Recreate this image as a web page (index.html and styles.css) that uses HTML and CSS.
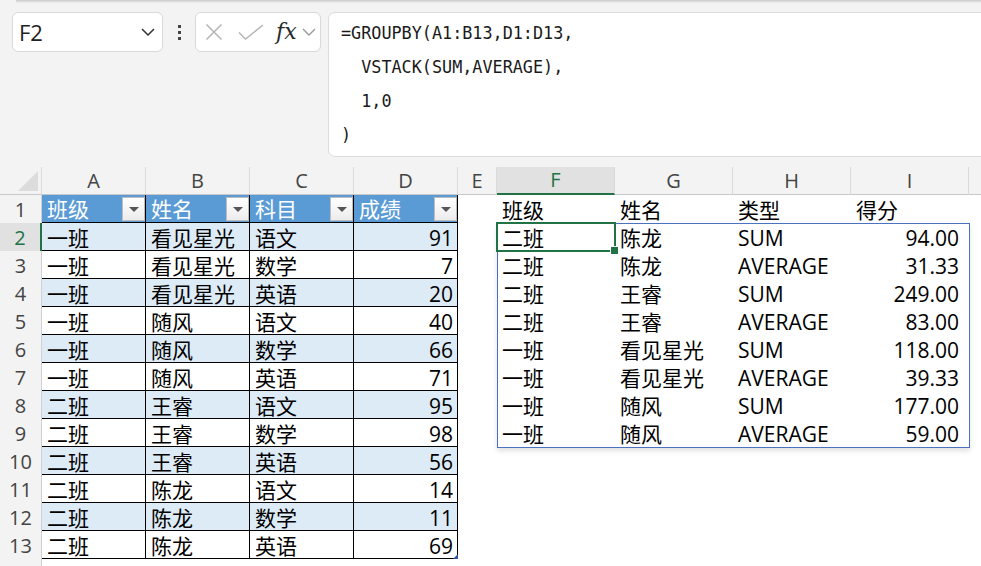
FILE: index.html
```html
<!DOCTYPE html>
<html lang="zh-CN">
<head>
<meta charset="utf-8">
<title>GROUPBY</title>
<link rel="stylesheet" href="styles.css">
</head>
<body>
<div class="topshade"></div>
<div class="fbar">
  <div class="namebox"><span>F2</span>
    <svg width="14" height="8" viewBox="0 0 14 8"><path d="M1 1l6 6 6-6" fill="none" stroke="#333" stroke-width="1.5"/></svg>
  </div>
  <div class="dots"><i></i><i></i><i></i></div>
  <div class="fxbox">
    <svg class="ic-x" width="18" height="18" viewBox="0 0 18 18"><path d="M1.5 1.5l15 15M16.5 1.5l-15 15" stroke="#b5b5b5" stroke-width="1.5" fill="none"/></svg>
    <svg class="ic-ok" width="26" height="16" viewBox="0 0 26 16"><path d="M1 8.5l6.5 6.5L25 1" stroke="#b5b5b5" stroke-width="1.5" fill="none"/></svg>
    <span class="fx">fx</span>
    <svg width="14" height="8" viewBox="0 0 14 8"><path d="M1 1l6 6 6-6" fill="none" stroke="#9a9a9a" stroke-width="1.4"/></svg>
  </div>
  <div class="formula"><pre>=GROUPBY(A1:B13,D1:D13,
  VSTACK(SUM,AVERAGE),
  1,0
)</pre></div>
</div>

<div class="sheet">
  <div class="c corner"><i class="tri"></i></div>
  <div class="c ch">A</div><div class="c ch">B</div><div class="c ch">C</div><div class="c ch">D</div><div class="c ch">E</div>
  <div class="c ch sel">F</div><div class="c ch">G</div><div class="c ch">H</div><div class="c ch">I</div><div class="c ch last"></div>

  <div class="c rh">1</div>
  <div class="c t th"><span>班级</span><i class="fb"></i></div>
  <div class="c t th"><span>姓名</span><i class="fb"></i></div>
  <div class="c t th"><span>科目</span><i class="fb"></i></div>
  <div class="c t th"><span>成绩</span><i class="fb"></i></div>
  <div class="c"></div><div class="c">班级</div><div class="c">姓名</div><div class="c">类型</div><div class="c">得分</div><div class="c"></div>

  <div class="c rh sel">2</div>
  <div class="c t band">一班</div><div class="c t band">看见星光</div><div class="c t band">语文</div><div class="c t band num">91</div>
  <div class="c"></div><div class="c">二班</div><div class="c">陈龙</div><div class="c">SUM</div><div class="c num2">94.00</div><div class="c"></div>

  <div class="c rh">3</div>
  <div class="c t">一班</div><div class="c t">看见星光</div><div class="c t">数学</div><div class="c t num">7</div>
  <div class="c"></div><div class="c">二班</div><div class="c">陈龙</div><div class="c">AVERAGE</div><div class="c num2">31.33</div><div class="c"></div>

  <div class="c rh">4</div>
  <div class="c t band">一班</div><div class="c t band">看见星光</div><div class="c t band">英语</div><div class="c t band num">20</div>
  <div class="c"></div><div class="c">二班</div><div class="c">王睿</div><div class="c">SUM</div><div class="c num2">249.00</div><div class="c"></div>

  <div class="c rh">5</div>
  <div class="c t">一班</div><div class="c t">随风</div><div class="c t">语文</div><div class="c t num">40</div>
  <div class="c"></div><div class="c">二班</div><div class="c">王睿</div><div class="c">AVERAGE</div><div class="c num2">83.00</div><div class="c"></div>

  <div class="c rh">6</div>
  <div class="c t band">一班</div><div class="c t band">随风</div><div class="c t band">数学</div><div class="c t band num">66</div>
  <div class="c"></div><div class="c">一班</div><div class="c">看见星光</div><div class="c">SUM</div><div class="c num2">118.00</div><div class="c"></div>

  <div class="c rh">7</div>
  <div class="c t">一班</div><div class="c t">随风</div><div class="c t">英语</div><div class="c t num">71</div>
  <div class="c"></div><div class="c">一班</div><div class="c">看见星光</div><div class="c">AVERAGE</div><div class="c num2">39.33</div><div class="c"></div>

  <div class="c rh">8</div>
  <div class="c t band">二班</div><div class="c t band">王睿</div><div class="c t band">语文</div><div class="c t band num">95</div>
  <div class="c"></div><div class="c">一班</div><div class="c">随风</div><div class="c">SUM</div><div class="c num2">177.00</div><div class="c"></div>

  <div class="c rh">9</div>
  <div class="c t">二班</div><div class="c t">王睿</div><div class="c t">数学</div><div class="c t num">98</div>
  <div class="c"></div><div class="c">一班</div><div class="c">随风</div><div class="c">AVERAGE</div><div class="c num2">59.00</div><div class="c"></div>

  <div class="c rh">10</div>
  <div class="c t band">二班</div><div class="c t band">王睿</div><div class="c t band">英语</div><div class="c t band num">56</div>
  <div class="c"></div><div class="c"></div><div class="c"></div><div class="c"></div><div class="c"></div><div class="c"></div>

  <div class="c rh">11</div>
  <div class="c t">二班</div><div class="c t">陈龙</div><div class="c t">语文</div><div class="c t num">14</div>
  <div class="c"></div><div class="c"></div><div class="c"></div><div class="c"></div><div class="c"></div><div class="c"></div>

  <div class="c rh">12</div>
  <div class="c t band">二班</div><div class="c t band">陈龙</div><div class="c t band">数学</div><div class="c t band num">11</div>
  <div class="c"></div><div class="c"></div><div class="c"></div><div class="c"></div><div class="c"></div><div class="c"></div>

  <div class="c rh">13</div>
  <div class="c t">二班</div><div class="c t">陈龙</div><div class="c t">英语</div><div class="c t num endcell">69</div>
  <div class="c"></div><div class="c"></div><div class="c"></div><div class="c"></div><div class="c"></div><div class="c"></div>

  <div class="c rh"></div><div class="fill"></div>

  <div class="spill"></div>
  <div class="selbox"><i class="handle"></i></div>
</div>
</body>
</html>
```

FILE: styles.css
```css
html, body {
  margin: 0;
  padding: 0;
}
body {
  width: 981px;
  height: 566px;
  overflow: hidden;
  background: #f3f3f3;
  font-family: "Open Sans", "Noto Sans CJK SC", sans-serif;
  color: #000;
}
.topshade {
  height: 3px;
  margin-left: 16px;
  background: linear-gradient(#c9c9c9, #f3f3f3);
}
.fbar {
  box-sizing: border-box;
  height: 164px;
  padding: 9px 0 0 12px;
  display: flex;
  align-items: flex-start;
}
.namebox {
  box-sizing: border-box;
  width: 151px;
  height: 40px;
  background: #fff;
  border: 1px solid #d9d9d9;
  border-radius: 6px;
  display: flex;
  align-items: center;
  justify-content: space-between;
  padding: 0 7px 0 6px;
  font-size: 22px;
  line-height: 28px;
  color: #222;
}
.dots {
  width: 32px;
  height: 40px;
  display: flex;
  flex-direction: column;
  align-items: center;
  justify-content: center;
  gap: 3px;
}
.dots i {
  width: 3px;
  height: 3px;
  background: #444;
}
.fxbox {
  box-sizing: border-box;
  width: 126px;
  height: 40px;
  background: #fff;
  border: 1px solid #d9d9d9;
  border-radius: 6px;
  display: flex;
  align-items: center;
  padding: 0 0 0 9px;
}
.ic-x { margin-right: 15px; }
.ic-ok { margin-right: 12px; }
.fx {
  font-family: "DejaVu Serif", "Liberation Serif", serif;
  font-style: italic;
  font-size: 22px;
  color: #2a2a2a;
  margin-right: 5px;
  line-height: 1;
}
.formula {
  box-sizing: border-box;
  flex: 1;
  margin-left: 7px;
  margin-right: -12px;
  height: 145px;
  background: #fff;
  border: 1px solid #dcdcdc;
  border-radius: 7px;
  padding: 3px 12px;
}
.formula pre {
  margin: 0;
  font-family: "DejaVu Sans Mono", monospace;
  font-size: 16.8px;
  line-height: 34px;
  color: #1a1a1a;
}

.sheet {
  position: relative;
  height: 399px;
  background: #fff;
  display: grid;
  grid-template-columns: 42px 104px 104px 104px 104px 39px 118px 118px 118px 118px 1fr;
  grid-template-rows: repeat(14, 28px) 1fr;
}
.c {
  box-sizing: border-box;
  display: flex;
  align-items: center;
  padding: 2px 5px 0;
  font-size: 21px;
  line-height: 24px;
  white-space: nowrap;
  min-width: 0;
}
.corner {
  background: #f3f3f3;
  border-right: 1px solid #dadada;
  border-bottom: 1px solid #c8c8c8;
  align-items: flex-end;
  justify-content: flex-end;
  padding: 0 3px 3px 0;
}
.tri {
  width: 0;
  height: 0;
  border-left: 20px solid transparent;
  border-bottom: 20px solid #dcdcdc;
}
.ch {
  background: #f3f3f3;
  border-right: 1px solid #dadada;
  border-bottom: 1px solid #c8c8c8;
  justify-content: center;
  color: #444;
  padding: 0;
  font-size: 20px;
}
.ch.sel {
  background: #e1e1e1;
  color: #217346;
  border-bottom: 2px solid #217346;
}
.ch.last { border-right: 0; }
.rh {
  background: #f3f3f3;
  border-right: 1px solid #d0d0d0;
  justify-content: center;
  color: #444;
  padding: 2px 0 0;
  font-size: 20px;
}
.rh.sel {
  background: #e1e1e1;
  color: #217346;
  border-right: 2px solid #217346;
}
.t {
  border-right: 1px solid #000;
  border-bottom: 1px solid #000;
}
.th {
  background: #5b9bd5;
  color: #fff;
  justify-content: space-between;
  padding: 0 0 0 5px;
}
.fb {
  box-sizing: border-box;
  width: 23px;
  height: 24px;
  margin-top: 1px;
  border: 1px solid #bdbdbd;
  background: linear-gradient(#ffffff, #ececec);
  display: flex;
  align-items: center;
  justify-content: center;
}
.fb::after {
  content: "";
  border-left: 5px solid transparent;
  border-right: 5px solid transparent;
  border-top: 5px solid #555;
}
.band { background: #ddebf7; }
.num { justify-content: flex-end; padding-right: 4px; }
.num2 { justify-content: flex-end; padding-right: 10px; }
.endcell { position: relative; }
.endcell::after {
  content: "";
  position: absolute;
  right: -1px;
  bottom: -1px;
  width: 0;
  height: 0;
  border-left: 5px solid transparent;
  border-bottom: 5px solid #2f4fa8;
}
.fill { grid-column: span 10; background: #fff; }

.spill {
  position: absolute;
  left: 497px;
  top: 56px;
  width: 473px;
  height: 225px;
  box-sizing: border-box;
  border: 1px solid #4a72c0;
  box-shadow: 0 3px 5px rgba(0, 0, 0, 0.12);
  pointer-events: none;
}
.selbox {
  position: absolute;
  left: 496px;
  top: 55px;
  width: 120px;
  height: 30px;
  box-sizing: border-box;
  border: 2px solid #217346;
  pointer-events: none;
}
.handle {
  position: absolute;
  right: -5px;
  bottom: -5px;
  width: 7px;
  height: 7px;
  background: #217346;
  border: 1px solid #fff;
}
```
